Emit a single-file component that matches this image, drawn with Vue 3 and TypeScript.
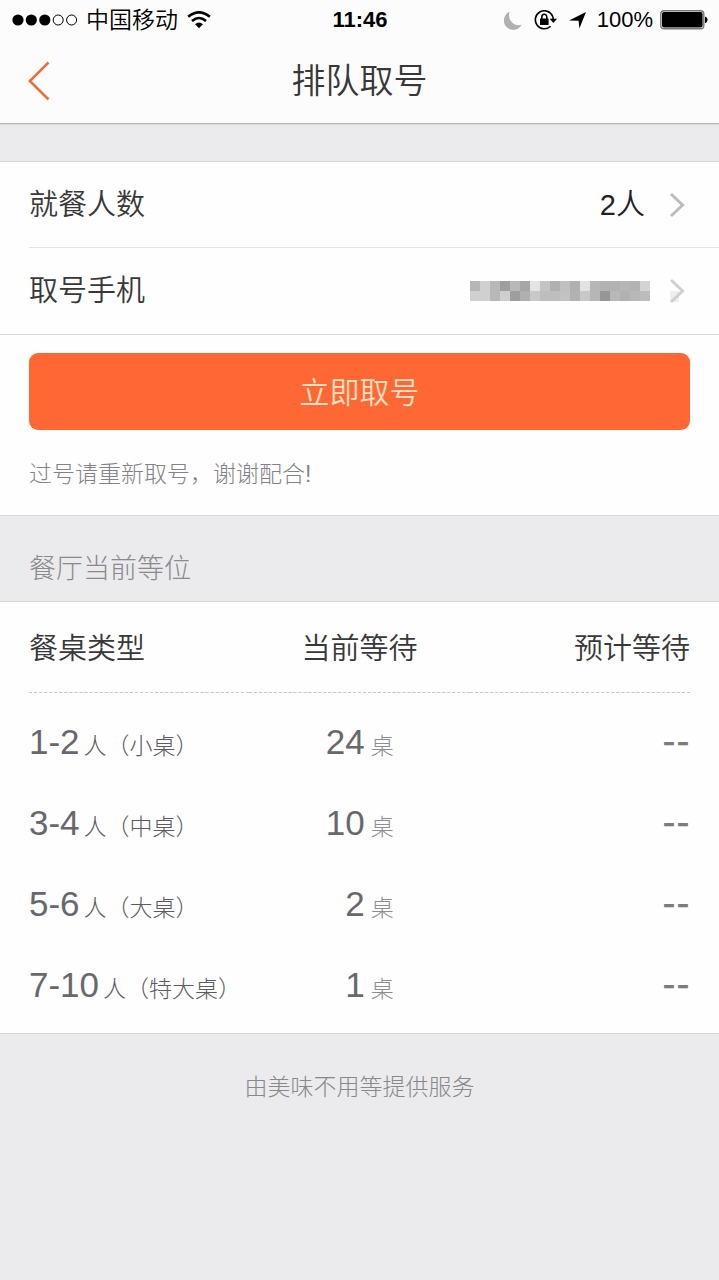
<script setup lang="ts">
interface QueueRow {
  range: string
  label: string
  waiting: number
  estimate: string
}

const rows: QueueRow[] = [
  { range: '1-2', label: '人（小桌）', waiting: 24, estimate: '--' },
  { range: '3-4', label: '人（中桌）', waiting: 10, estimate: '--' },
  { range: '5-6', label: '人（大桌）', waiting: 2, estimate: '--' },
  { range: '7-10', label: '人（特大桌）', waiting: 1, estimate: '--' },
]

// Grey levels of the mosaic that hides the phone number, row by row
const mosaic: number[][] = [
  [182, 208, 184, 158, 184, 166, 228, 196, 176, 192, 176, 226, 182, 178, 178, 182, 178, 212],
  [208, 208, 184, 206, 158, 176, 200, 190, 190, 194, 178, 200, 182, 150, 184, 178, 184, 188],
]
</script>

<template>
  <div class="page">
    <header class="top">
      <div class="status">
        <div class="status-side">
          <svg class="signal" viewBox="0 0 66 12" aria-hidden="true">
            <circle cx="6" cy="6" r="5.6" />
            <circle cx="19.3" cy="6" r="5.6" />
            <circle cx="32.8" cy="6" r="5.6" />
            <circle class="hollow" cx="46.2" cy="6" r="5" />
            <circle class="hollow" cx="59.6" cy="6" r="5" />
          </svg>
          <span class="carrier">中国移动</span>
          <svg class="wifi" viewBox="0 0 24 18" aria-hidden="true">
            <path class="arc" d="M1.2 5.8Q12 -3.2 22.8 5.8" />
            <path class="arc" d="M5 10Q12 4 19 10" />
            <path d="M8 13.2Q12 9.8 16 13.2L12 17.2Z" />
          </svg>
        </div>
        <time class="clock">11:46</time>
        <div class="status-side right">
          <svg class="moon" viewBox="0 0 18 19" aria-hidden="true">
            <path d="M5.6 0.8A9.4 9.4 0 1 0 17.6 13.8A10 10 0 0 1 5.6 0.8Z" />
          </svg>
          <svg class="lock" viewBox="0 0 23 20" aria-hidden="true">
            <path class="ring" d="M18.6 6.2A9 9 0 1 0 16.6 16.2M18.6 6.2Q19.4 8 19.3 10" />
            <path d="M15.6 8.8H23L19.4 13Z" />
            <rect x="6" y="8.4" width="8.6" height="6.6" rx=".6" />
            <path class="shackle" d="M7.8 9V7A2.5 2.8 0 0 1 12.8 7V9" />
          </svg>
          <svg class="arrow" viewBox="0 0 17 17" aria-hidden="true">
            <path d="M17 0L10.4 16.4L9.6 8.8L0 8.4Z" />
          </svg>
          <span class="percent">100%</span>
          <svg class="battery" viewBox="0 0 48 20" aria-hidden="true">
            <rect class="case" x=".8" y=".8" width="43" height="18" rx="3.4" />
            <rect x="2" y="2" width="40.6" height="15.6" rx="2" />
            <path d="M45 6.4Q47.6 7.2 47.6 9.8T45 13.2Z" />
          </svg>
        </div>
      </div>
      <nav class="nav">
        <button class="back" type="button" aria-label="返回">
          <svg viewBox="0 0 22 40" aria-hidden="true"><path d="M20.5 1.5L1.8 20L20.5 38.5" /></svg>
        </button>
        <h1>排队取号</h1>
      </nav>
    </header>

    <main>
      <section class="panel form">
        <button class="field" type="button">
          <span>就餐人数</span>
          <span class="value">2人</span>
          <svg class="chevron" viewBox="0 0 16 26" aria-hidden="true"><path d="M2 2L13.6 13L2 24" /></svg>
        </button>
        <button class="field" type="button">
          <span>取号手机</span>
          <svg class="mosaic" viewBox="0 0 180 20" shape-rendering="crispEdges" aria-hidden="true">
            <template v-for="(line, y) in mosaic" :key="y">
              <rect
                v-for="(level, x) in line"
                :key="x"
                :x="x * 10"
                :y="y * 10"
                width="10"
                height="10"
                :fill="`rgb(${level}, ${level}, ${level})`"
              />
            </template>
          </svg>
          <svg class="chevron faded" viewBox="0 0 16 26" aria-hidden="true">
            <path class="haze" d="M1 13H10V24H1Z" />
            <path d="M2 2L13.6 13L2 24" />
          </svg>
        </button>
      </section>

      <section class="panel action">
        <button class="submit" type="button">立即取号</button>
        <p>过号请重新取号，谢谢配合!</p>
      </section>

      <h2>餐厅当前等位</h2>

      <section class="panel queue">
        <table>
          <thead>
            <tr>
              <th scope="col">餐桌类型</th>
              <th scope="col">当前等待</th>
              <th scope="col">预计等待</th>
            </tr>
          </thead>
          <tbody>
            <tr v-for="row in rows" :key="row.range">
              <td><span class="num">{{ row.range }}</span><span class="kind">{{ row.label }}</span></td>
              <td><span class="num">{{ row.waiting }}</span><span class="unit">桌</span></td>
              <td><span class="estimate">{{ row.estimate }}</span></td>
            </tr>
          </tbody>
        </table>
      </section>
    </main>

    <footer>由美味不用等提供服务</footer>
  </div>
</template>

<style>
body {
  margin: 0;
  background: #ebebed;
}
</style>

<style scoped>
.page {
  min-height: 100vh;
  background: #ebebed;
  color: #383838;
  font-family: "Liberation Sans", "Noto Sans CJK SC", sans-serif;
  font-weight: 350;
}

svg {
  display: block;
  flex: none;
}

button {
  font: inherit;
  color: inherit;
  border: 0;
  padding: 0;
  background: none;
  cursor: pointer;
}

.top {
  background: #fdfcfd;
  border-bottom: 1px solid #b4b4b4;
  box-shadow: 0 1px 1px #dcdcdc;
}

.status {
  display: grid;
  grid-template-columns: 1fr auto 1fr;
  align-items: center;
  height: 40px;
  padding: 0 11px 0 12px;
  color: #000;
}

.status-side {
  display: flex;
  align-items: center;
}

.right {
  justify-content: flex-end;
}

.signal {
  width: 66px;
  height: 12px;
}

.hollow {
  fill: none;
  stroke: #000;
  stroke-width: 1;
}

.carrier {
  margin: 0 9px 0 8px;
  font-size: 23px;
  line-height: 40px;
}

.wifi {
  width: 24px;
  height: 18px;
}

.arc {
  fill: none;
  stroke: #000;
  stroke-width: 2.6;
}

.clock {
  font-size: 22px;
  font-weight: 700;
}

.moon {
  width: 18px;
  height: 19px;
  margin-right: 12px;
  fill: #b0b0b0;
}

.lock {
  width: 23px;
  height: 20px;
  margin-right: 12px;
}

.ring,
.shackle {
  fill: none;
  stroke: #000;
  stroke-width: 1.6;
}

.arrow {
  width: 17px;
  height: 17px;
  margin-right: 11px;
}

.percent {
  margin-right: 7px;
  font-size: 22px;
}

.battery {
  width: 48px;
  height: 20px;
}

.case {
  fill: none;
  stroke: #777;
  stroke-width: 1.4;
}

.nav {
  display: grid;
  grid-template-columns: 80px 1fr 80px;
  align-items: center;
  height: 83px;
}

.back {
  display: flex;
  align-items: center;
  height: 82px;
  align-self: start;
  padding-left: 28px;
}

.back svg {
  width: 22px;
  height: 40px;
  fill: none;
  stroke: #e8703f;
  stroke-width: 2.6;
}

h1 {
  margin: 0;
  font-size: 34px;
  font-weight: inherit;
  line-height: 83px;
  text-align: center;
}

.panel {
  background: #fefefe;
}

.form {
  margin-top: 37px;
  border-top: 1px solid #d6d6d6;
  border-bottom: 1px solid #d6d6d6;
  padding: 0 0 1px 29px;
}

.field {
  display: flex;
  box-sizing: content-box;
  align-items: center;
  width: calc(100% - 34px);
  height: 85px;
  padding-right: 34px;
  font-size: 29px;
  line-height: 40px;
}

.field + .field {
  border-top: 1px solid #e4e4e4;
}

.value,
.mosaic {
  margin-left: auto;
}

.value {
  color: #222;
  margin-right: 24px;
}

.mosaic {
  width: 180px;
  height: 20px;
  margin-right: 19px;
}

.chevron {
  width: 16px;
  height: 26px;
  fill: none;
  stroke: #bcbcbc;
  stroke-width: 3;
}

.faded {
  stroke: #d0d0d0;
}

.haze {
  fill: #eee;
  stroke: none;
}

.action {
  padding: 18px 29px 21px;
  border-bottom: 1px solid #d6d6d8;
}

.submit {
  display: block;
  width: 100%;
  height: 77px;
  padding-bottom: 4px;
  border-radius: 9px;
  background: #ff6735;
  color: #ffe0c0;
  font-size: 30px;
}

p {
  margin: 25px 0 0;
  color: #838387;
  font-size: 23px;
  font-weight: 300;
  line-height: 39px;
}

h2 {
  margin: 0;
  padding: 33px 29px 12px;
  color: #8a8a8d;
  font-size: 27px;
  font-weight: 300;
  line-height: 40px;
}

.queue {
  padding: 0 29px 8px;
  border-top: 1px solid #d6d6d8;
  border-bottom: 1px solid #d6d6d8;
}

table {
  width: 100%;
  border-collapse: collapse;
  table-layout: fixed;
}

th {
  height: 88px;
  padding: 0 0 2px;
  font-size: 29px;
  font-weight: inherit;
  text-align: left;
  border-bottom: 1px dashed #c8c8cc;
}

th:nth-child(2) {
  text-align: center;
}

th:nth-child(3),
td:nth-child(3) {
  text-align: right;
}

td {
  height: 81px;
  padding: 0;
  color: #68686c;
  white-space: nowrap;
}

tbody tr:first-child td {
  padding-top: 8px;
}

td:nth-child(2) {
  padding-right: 76px;
  text-align: right;
}

.num {
  font-size: 35px;
}

.kind,
.unit {
  margin-left: 4px;
  font-size: 23px;
  font-weight: 300;
}

.kind {
  color: #5c5c60;
}

.unit {
  margin-left: 6px;
  color: #8e8e92;
}

.estimate {
  font-family: Inter, "Liberation Sans", sans-serif;
  font-size: 30px;
  font-weight: 600;
  color: #7c7c80;
}

footer {
  padding: 33px 29px;
  color: #88888b;
  font-size: 23px;
  font-weight: 300;
  line-height: 40px;
  text-align: center;
}
</style>
